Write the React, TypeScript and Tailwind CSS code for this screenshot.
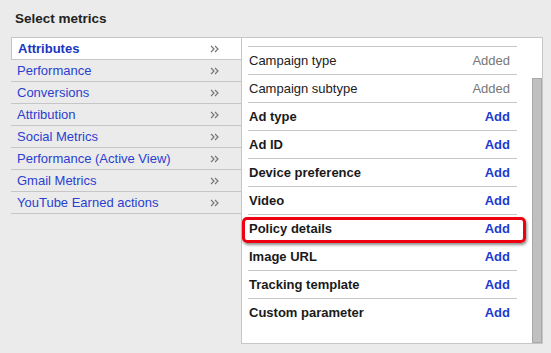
import React from 'react';

const categories = [
  'Attributes',
  'Performance',
  'Conversions',
  'Attribution',
  'Social Metrics',
  'Performance (Active View)',
  'Gmail Metrics',
  'YouTube Earned actions',
];

const metrics: { name: string; added?: boolean }[] = [
  { name: 'Campaign type', added: true },
  { name: 'Campaign subtype', added: true },
  { name: 'Ad type' },
  { name: 'Ad ID' },
  { name: 'Device preference' },
  { name: 'Video' },
  { name: 'Policy details' },
  { name: 'Image URL' },
  { name: 'Tracking template' },
  { name: 'Custom parameter' },
];

function Chevrons() {
  return (
    <svg width="10" height="8" viewBox="0 0 10 8" className="text-[#777]">
      <path d="M1 1l3 3-3 3M5 1l3 3-3 3" fill="none" stroke="currentColor" strokeWidth="1.2" />
    </svg>
  );
}

export default function App() {
  return (
    <div
      className="w-[551px] h-[353px] bg-[#ebebeb] overflow-hidden text-[13px]"
      style={{ fontFamily: '"Liberation Sans", Arial, sans-serif' }}
    >
      <div className="h-[37px] pl-[15px] pt-[11px] font-bold text-[13.5px] text-[#222] leading-[16px]">Select metrics</div>
      <div className="flex ml-[11px]">
        <div className="w-[230px]">
          {categories.map((c, i) => (
            <div
              key={c}
              className={
                i === 0
                  ? 'h-[23px] flex items-center justify-between pl-[6px] pr-[21px] bg-white border-t border-l border-b border-[#c6c6c6] font-bold text-[#1a35c0]'
                  : 'h-[22px] flex items-center justify-between pl-[6px] pr-[21px] border-b border-[#c6c6c6] text-[#2a3fd0]'
              }
            >
              <span>{c}</span>
              <Chevrons />
            </div>
          ))}
        </div>
        <div className="relative w-[302px] h-[307px] bg-white border border-[#c6c6c6]">
          <div className="ml-[6px] w-[269px]">
            <div className="h-[9px] border-b border-[#c6c6c6]" />
            {metrics.map((m, i) => (
              <div
                key={m.name}
                className={
                  'h-[28px] flex items-center justify-between pl-[1px] pr-[7px]' +
                  (i < metrics.length - 1 ? ' border-b border-[#c6c6c6]' : '')
                }
              >
                <span className={m.added ? 'text-[#222]' : 'font-bold text-[#1a1a1a]'}>{m.name}</span>
                {m.added ? (
                  <span className="text-[#777]">Added</span>
                ) : (
                  <span className="font-bold text-[#1a3ccc]">Add</span>
                )}
              </div>
            ))}
          </div>
          <div className="absolute right-0 top-[40px] bottom-0 w-[10px] bg-[#c0c0c0] border border-[#a8a8a8]" />
          <div className="absolute left-0 top-[179px] w-[284px] h-[26px] border-[3px] border-[#ee0010] rounded-[5px] shadow-[1px_2px_3px_rgba(0,0,0,0.45)]" />
        </div>
      </div>
    </div>
  );
}
